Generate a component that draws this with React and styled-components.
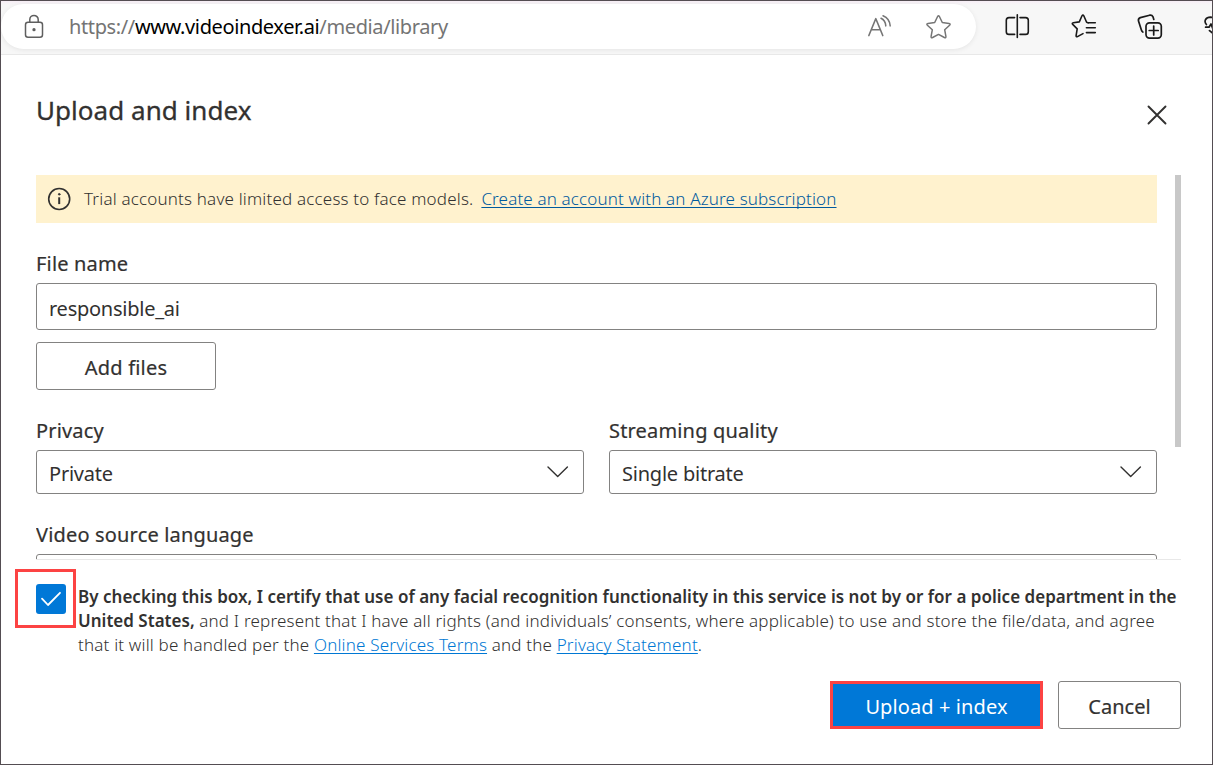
import React from 'react';
import styled, { createGlobalStyle } from 'styled-components';

const GlobalStyle = createGlobalStyle`
  * { box-sizing: border-box; }
  body { margin: 0; background: #fff; }
  button, input { font: inherit; color: inherit; }
`;

const Window = styled.div`
  display: flex;
  flex-direction: column;
  width: 1213px;
  height: 765px;
  border: 1px solid #544d52;
  overflow: hidden;
  background: #fff;
  color: #323130;
  font-family: 'Noto Sans', 'Open Sans', sans-serif;
`;

const BrowserBar = styled.header`
  display: flex;
  align-items: flex-start;
  flex: none;
  height: 54px;
  padding-top: 3px;
  overflow: hidden;
  border-bottom: 1px solid #e8e8e8;
  background: linear-gradient(#f7eef6 0, #f7f7f7 4px);
`;

const AddressField = styled.div`
  display: flex;
  align-items: center;
  flex: none;
  width: 975px;
  height: 45px;
  padding: 0 24px 0 22px;
  border-radius: 23px;
  background: #fff;
  box-shadow: 0 1px 5px rgba(0, 0, 0, 0.08);
`;

const Address = styled.span`
  flex: 1;
  margin-left: 24px;
  font-size: 20px;
  line-height: 30px;
  letter-spacing: -0.38px;
  white-space: nowrap;
  color: #747474;
`;

const Host = styled.span`
  color: #000;
`;

const Icon = styled.svg`
  display: block;
  flex: none;
  fill: none;
  stroke: currentColor;
  stroke-linecap: round;
  stroke-linejoin: round;
  overflow: visible;
`;

const FieldIcons = styled.div`
  display: flex;
  align-items: center;
  gap: 34px;
  color: #757575;
`;

const Tools = styled.div`
  display: flex;
  align-items: center;
  gap: 42px;
  height: 44px;
  margin-left: 29px;
  color: #1a1a1a;
`;

const Heading = styled.div`
  display: flex;
  justify-content: space-between;
  align-items: flex-start;
  flex: none;
  height: 120px;
  padding: 35px 45px 0 35px;
`;

const Title = styled.h1`
  margin: 0;
  font-size: 26px;
  font-weight: 400;
  line-height: 40px;
  letter-spacing: 0.04px;
  -webkit-text-stroke: 0.3px currentColor;
`;

const CloseButton = styled.button`
  display: flex;
  margin: 15px 0 0;
  padding: 0;
  border: 0;
  background: none;
`;

const ScrollArea = styled.main`
  display: flex;
  justify-content: space-between;
  flex: none;
  height: 385px;
  margin: 0 31px 0 35px;
  overflow: hidden;
  border-bottom: 1px solid #e8e8e8;
`;

const ScrollThumb = styled.div`
  width: 6px;
  height: 272px;
  background: #c8c8c8;
`;

const Form = styled.div`
  display: flex;
  flex-direction: column;
  width: 1121px;
`;

const Notice = styled.div`
  display: flex;
  align-items: center;
  flex: none;
  height: 48px;
  padding-left: 12px;
  background: #fff2ce;
  font-size: 17px;
  font-weight: 300;
  line-height: 24px;
  white-space: nowrap;
`;

const NoticeText = styled.span`
  margin-left: 13px;
  letter-spacing: 0.18px;
`;

const Link = styled.a`
  color: ${(p) => (p.$dark ? '#005a9e' : '#0078d4')};
  text-decoration: underline;
  text-underline-offset: 2px;
  text-decoration-thickness: 1px;
  text-decoration-skip-ink: none;
`;

const NoticeLink = styled(Link)`
  margin-left: 8px;
  letter-spacing: 0.15px;
`;

const Label = styled.label`
  display: block;
  flex: none;
  height: 30px;
  margin-top: ${(p) => p.$top}px;
  font-size: 20px;
  font-weight: 400;
  line-height: 30px;
  letter-spacing: 0.17px;
  white-space: nowrap;
  -webkit-text-stroke: 0.2px currentColor;
`;

const TextInput = styled.input`
  flex: none;
  width: 100%;
  height: 47px;
  margin-top: 4px;
  padding: 4px 12px 0;
  border: 1px solid #838281;
  border-radius: 3px;
  outline: none;
  background: #fff;
  font-size: 20px;
  letter-spacing: -0.25px;
`;

const Button = styled.button`
  flex: none;
  width: ${(p) => p.$width}px;
  height: 48px;
  padding: 3px 0 0;
  border: 1px solid #838281;
  border-radius: 3px;
  background: #fff;
  font-size: 20px;
  font-weight: 400;
  -webkit-text-stroke: 0.2px currentColor;
`;

const AddButton = styled(Button)`
  margin-top: 12px;
  letter-spacing: 0.2px;
`;

const Columns = styled.div`
  display: grid;
  flex: none;
  grid-template-columns: 548px 548px;
  column-gap: 25px;
`;

const Select = styled.div`
  display: flex;
  align-items: center;
  justify-content: space-between;
  flex: none;
  height: 44px;
  margin-top: 4px;
  padding: 3px 15px 0 12px;
  border: 1px solid #838281;
  border-radius: 3px;
  font-size: 20px;
  letter-spacing: -0.22px;
`;

const Footer = styled.footer`
  display: flex;
  flex-direction: column;
  padding: 9px 31px 0 14px;
`;

const Consent = styled.div`
  display: flex;
  align-items: flex-start;
  height: 88px;
`;

const CheckHighlight = styled.div`
  display: flex;
  flex: none;
  align-items: center;
  justify-content: flex-end;
  width: 61px;
  height: 59px;
  padding-right: 7px;
  border: 3px solid #fc4343;
`;

const Checkbox = styled.span`
  display: flex;
  align-items: center;
  justify-content: center;
  width: 30px;
  height: 30px;
  border-radius: 3px;
  background: #0078d7;
  color: #fff;
`;

const ConsentText = styled.p`
  margin: 16px 0 0 2px;
  font-size: 17px;
  font-weight: 300;
  line-height: 24px;
  letter-spacing: 0.182px;
  white-space: nowrap;
`;

const Strong = styled.strong`
  font-weight: 600;
  letter-spacing: 0.015px;
`;

const Actions = styled.div`
  display: flex;
  justify-content: flex-end;
  gap: 15px;
  margin-top: 24px;
`;

const PrimaryButton = styled(Button)`
  border: 3px solid #fc4343;
  border-radius: 0;
  background: #0078d7;
  color: #fff;
  letter-spacing: 0.1px;
  -webkit-text-stroke: 0;
`;

const ChevronIcon = styled(Icon)`
  margin-top: -4px;
`;

const Chevron = () => (
  <ChevronIcon width="21" height="12" viewBox="0 0 21 12" strokeWidth="1.4">
    <path d="M1 1 10.7 10.5 20.4 1" />
  </ChevronIcon>
);

export default function App() {
  return (
    <>
      <GlobalStyle />
      <Window>
        <BrowserBar>
          <AddressField>
            <Icon width="22" height="24" viewBox="0 0 22 24" strokeWidth="1.5" color="#5f5f5f">
              <rect x="2.5" y="7.3" width="17" height="14.9" rx="2.5" />
              <path d="M6.8 7V4.6a4.2 4.2 0 0 1 8.4 0V7" />
              <circle cx="11" cy="14.7" r=".9" fill="currentColor" />
            </Icon>
            <Address>
              https://<Host>www.videoindexer.ai</Host>/media/library
            </Address>
            <FieldIcons>
              <Icon width="24" height="24" viewBox="0 0 24 24" strokeWidth="1.5">
                <path d="m.8 20.6 7-17 7 17M3.4 14.8h8.8" />
                <path d="M13 3.3c3 1.4 4.6 4 4.8 7.6" />
                <path d="M15 .7c4.4 1.8 6.9 5.2 7.2 10.2" />
              </Icon>
              <Icon width="26" height="26" viewBox="0 0 26 26" strokeWidth="1.5">
                <path d="M11.6 2.5q.9-1.7 1.8 0l2.9 6 6.7.9q1.9.4.6 1.8l-4.9 4.6 1.2 6.6q.2 1.8-1.5 1.1l-5.9-3.1-5.9 3.1q-1.7.7-1.5-1.1l1.2-6.6-4.9-4.6q-1.3-1.4.6-1.8l6.7-.9Z" />
              </Icon>
            </FieldIcons>
          </AddressField>
          <Tools>
            <Icon width="24" height="26" viewBox="0 0 24 26" strokeWidth="1.6">
              <path d="M12.3 1.8v22.6M9.6 4.6H4Q1.3 4.6 1.3 7.3v11.4q0 2.7 2.7 2.7h5.6M15 4.6h5.6q2.7 0 2.7 2.7v11.4q0 2.7-2.7 2.7H15" />
            </Icon>
            <Icon width="25" height="26" viewBox="0 0 25 26" strokeWidth="1.6">
              <path d="M17.4 9.9 15.6 9.3 12.8 2.8q-.9-1.6-1.8 0L8.3 8.9l-6 .9q-1.7.4-.6 1.6l4.5 4.5L5.1 22.6q-.2 1.7 1.4 1L12 20.6M16.5 9.8h7.8M15.4 14.8h8.9M15.4 19.6h8.9" />
            </Icon>
            <Icon width="26" height="26" viewBox="0 0 26 26" strokeWidth="1.7">
              <rect x="8" y="9.8" width="15.3" height="15.3" rx="3.5" />
              <path d="M15.7 13v9M11.2 17.5h9M4.8 19Q3.8 18.5 3.4 17.1L.5 8.1Q-.1 5.5 2.3 4.6L11.6 2.2q2.4-.5 3.4 1.6l.8 2.6" />
            </Icon>
            <Icon width="24" height="24" viewBox="0 0 24 24" strokeWidth="1.7">
              <path d="M.4 10.5C-2.5 7-.2 3.2 4.5 3.2q2.8.1 4.4 2M-.4 13.2H3l2-3.2 2.5 6.4M3.5 16.6l6 5" />
            </Icon>
          </Tools>
        </BrowserBar>
        <Heading>
          <Title>Upload and index</Title>
          <CloseButton aria-label="Close">
            <Icon width="20" height="20" viewBox="0 0 20 20" strokeWidth="1.9">
              <path d="m1.5 1.5 17 17M18.5 1.5l-17 17" />
            </Icon>
          </CloseButton>
        </Heading>
        <ScrollArea>
          <Form>
            <Notice>
              <Icon width="23" height="23" viewBox="0 0 23 23" strokeWidth="1.6">
                <circle cx="11.2" cy="11" r="10.5" />
                <path d="M11.2 9.3v6.8" strokeWidth="2" strokeLinecap="butt" />
                <circle cx="11.2" cy="6.3" r=".8" fill="currentColor" strokeWidth="1" />
              </Icon>
              <NoticeText>Trial accounts have limited access to face models.</NoticeText>
              <NoticeLink $dark>Create an account with an Azure subscription</NoticeLink>
            </Notice>
            <Label $top={26}>File name</Label>
            <TextInput defaultValue="responsible_ai" />
            <AddButton $width={180}>Add files</AddButton>
            <Columns>
              <div>
                <Label $top={26}>Privacy</Label>
                <Select>
                  Private
                  <Chevron />
                </Select>
              </div>
              <div>
                <Label $top={26}>Streaming quality</Label>
                <Select>
                  Single bitrate
                  <Chevron />
                </Select>
              </div>
            </Columns>
            <Label $top={26}>Video source language</Label>
            <Select />
          </Form>
          <ScrollThumb />
        </ScrollArea>
        <Footer>
          <Consent>
            <CheckHighlight>
              <Checkbox>
                <Icon width="20" height="16" viewBox="0 0 20 16" strokeWidth="1.8">
                  <path d="m1 7.6 6 6.4L19 1.8" />
                </Icon>
              </Checkbox>
            </CheckHighlight>
            <ConsentText>
              <Strong>
                By checking this box, I certify that use of any facial recognition functionality in this service is not
                by or for a police department in the
                <br />
                United States,
              </Strong>{' '}
              and I represent that I have all rights (and individuals’ consents, where applicable) to use and store the
              file/data, and agree
              <br />
              that it will be handled per the <Link>Online Services Terms</Link> and the <Link>Privacy Statement</Link>.
            </ConsentText>
          </Consent>
          <Actions>
            <PrimaryButton $width={213}>Upload + index</PrimaryButton>
            <Button $width={123}>Cancel</Button>
          </Actions>
        </Footer>
      </Window>
    </>
  );
}
